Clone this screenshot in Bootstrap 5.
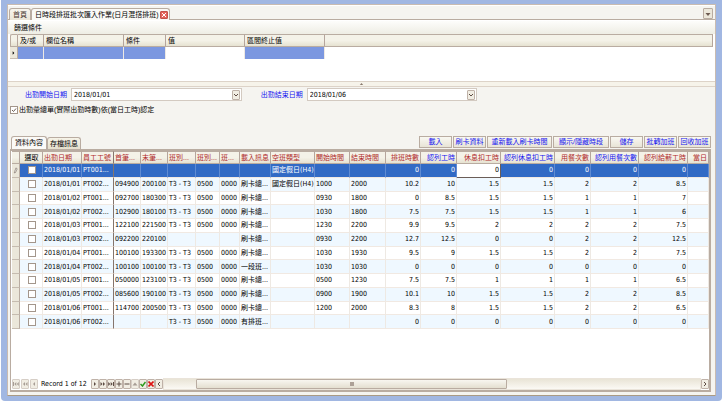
<!DOCTYPE html>
<html lang="zh-Hant">
<head>
<meta charset="utf-8">
<meta name="viewport" content="width=device-width, initial-scale=1">
<title>日時段排班批次匯入作業</title>
<link href="https://cdn.jsdelivr.net/npm/bootstrap@5.3.0/dist/css/bootstrap.min.css" rel="stylesheet">
<style>
:root{--line:#b9aca1;--soft:#ddd3c8;--face:#f5f4f0;--data:"DejaVu Sans Condensed","Noto Sans CJK TC",sans-serif}
body{font-family:"Liberation Sans","Noto Sans CJK TC",sans-serif;font-size:7px;line-height:10px;color:#000;background:#fff;padding:0 1px 1px}
button,input{font:inherit;color:inherit;padding:0;margin:0;border-radius:0}
svg{display:block}
.frame{background:#a1b7e2;padding:4px 6px 5px 6px;border-radius:0 0 4px 4px}
.shell{background:var(--face);border:1px solid #c9bbb0;border-bottom-color:#a99a84}
.tabstrip{height:15px;padding:2px 2px 0 1px;border-bottom:1px solid var(--line);border-top:1px solid #fff}
.pagetab{height:13px;background:linear-gradient(#f8f6ee,#e9e4d4);border:1px solid var(--line);border-bottom:0;border-radius:3px 3px 0 0;padding:0 3px;color:#4a3a34}
.pagetab.current{background:#faf9f6;color:#000;padding-right:1px}
.closebox{width:8px;height:8px;background:#e4645c;border:1px solid #c4524b;border-radius:1px;margin-left:1px}
.dropbox{width:10px;height:11px;background:#ece7da;border:1px solid var(--line);border-radius:1px;color:#6d5a50}
.filterhead{height:14px;padding:0 6px;border-top:1px solid #fff;background:linear-gradient(#fdfdfb,#eeede4)}
.filterbody{background:#fff;height:47px;padding:0 2px}
.gridtable{table-layout:fixed;border-collapse:separate;border-spacing:0;line-height:10px}
.gridtable th{font-weight:400;height:13px;padding:0 2px;background:linear-gradient(#f4f2e8 50%,#e6e2d1);border-right:1px solid #b5a59c;border-top:1px solid var(--line);border-bottom:1px solid var(--line);white-space:nowrap;overflow:hidden}
.gridtable td{height:12px;padding:0 2px;white-space:nowrap;overflow:hidden;border-right:1px solid #eee9e3}
.gridtable td.marker{background:#ebe7da;border-right:1px solid var(--line);border-bottom:1px solid #c6bcb0;padding:0 1px}
.filterbody .gridtable th:first-child{border-left:1px solid var(--line);border-top-left-radius:2px}
.filterbody .gridtable td.fill{background:#7b97e0}
.splitbar{height:6px;border-top:1px solid var(--soft);border-bottom:1px solid var(--soft);background:#f6f3ea;color:#8a7a6e}
.datefield{background:#fff;border:1px solid #d3cac1;height:13px;padding:0 1px 0 2px}
.datefield input{border:0;outline:0;background:none;min-width:0;height:11px;font-family:var(--data)}
.bluetext{color:#1414f0}
.dates{padding-top:1px}
.dates>div{padding-right:2px}
.dates .dlabel{width:59px;text-align:right}
.tickbox{appearance:none;width:8px;height:8px;background:#fff;border:1px solid #a3968b;flex:none}
.tickbox:checked{background:#fff url("data:image/svg+xml,%3Csvg xmlns='http://www.w3.org/2000/svg' viewBox='0 0 6 6'%3E%3Cpath d='M1 3l1.500 1.500L5 1.500' fill='none' stroke='%236d6056'/%3E%3C/svg%3E") center/6px 6px no-repeat}
.tick{padding:0 2px;margin-top:4px;height:10px;gap:1px}
.lowerpart{padding:21px 4px 3px 2px}
.subtab{height:12px;border:1px solid var(--line);border-bottom:0;border-radius:3px 3px 0 0;padding:0 2px;background:linear-gradient(#f6f3e8,#e5dfcd);white-space:nowrap}
.subtab.current{height:13px;background:#fbfaf7;margin-left:1px;padding:0 3px}
.acts{gap:1px}
.act{height:12px;border:1px solid var(--line);background:linear-gradient(#f9f8f2,#e8e4d6);color:#1414f0;white-space:nowrap;line-height:10px;overflow:hidden}
.w-a{width:33px}.w-b{width:65px}.w-c{width:56px}
.gridbox{background:#fff;border:2px solid var(--line);border-left-width:1px;padding-left:1px}
.rota{height:178px}
.rota th{color:#b02a2a}
.gridtable.rota th,.gridtable.rota td{padding:0 0 0 1px}
.gridtable.rota .text-end{padding:0 1px}
.rota th.dk{color:#000}
.rota th.bl{color:#1414f0}
.rota td{border-bottom:1px solid #f1e9e2;font-family:var(--data)}
.rota tbody tr:nth-child(even) td:not(.marker){background:#eff8ff}
.rota tbody tr.sel td:not(.marker){background:#316ac5;color:#fff;border-right-color:#5f8bd2}
.rota tbody tr.sel td.editing:not(.marker){background:#fff;color:#000;border-color:#6b5d57}
.rota th.fixedcol,.rota td.fixedcol,.rota tbody tr.sel td.fixedcol:not(.marker){border-right:1px solid #85756d}
.rota .tickbox{display:block;margin:auto}
.pager{height:12px}
.pager .firsts{gap:1px}
.recno{margin:0 1px 0 3px;width:49px;white-space:nowrap;font-family:var(--data)}
.nb{width:8px;height:10px;background:#f1ede3;border:1px solid #bfb2a8;border-radius:1px;color:#5d4c44}
.nb:disabled{color:#a79d95;border-color:#d6cec6}
.rail{height:12px;background:linear-gradient(#e9e4d6,#fbf9f4);border:1px solid #eae4da}
.thumb{width:58%;height:10px;margin-left:6%;background:linear-gradient(#f8f6f0,#e4dfd0);border:1px solid var(--line);border-radius:1px}
.grip{width:4px;height:4px;background:#ada197}
</style>
<script src="https://cdn.jsdelivr.net/npm/bootstrap@5.3.0/dist/js/bootstrap.bundle.min.js"></script>
</head>
<body class="vh-100 d-flex flex-column">
<svg class="d-none">
<symbol id="i-prev" viewBox="0 0 6 6"><path d="M4 1L2 3l2 2z" fill="currentColor"/></symbol>
<symbol id="i-next" viewBox="0 0 6 6"><path d="M2 1l2 2-2 2z" fill="currentColor"/></symbol>
<symbol id="i-pprev" viewBox="0 0 6 6"><path d="M3 1L1 3l2 2zM5.500 1l-2 2 2 2z" fill="currentColor"/></symbol>
<symbol id="i-nnext" viewBox="0 0 6 6"><path d="M.5 1l2 2-2 2zM3 1l2 2-2 2z" fill="currentColor"/></symbol>
<symbol id="i-first" viewBox="0 0 6 6"><path d="M0 1h1v4H0zM3.300 1l-2 2 2 2zM5.800 1l-2 2 2 2z" fill="currentColor"/></symbol>
<symbol id="i-last" viewBox="0 0 6 6"><path d="M5 1h1v4H5zM.2 1l2 2-2 2zM2.700 1l2 2-2 2z" fill="currentColor"/></symbol>
<symbol id="i-plus" viewBox="0 0 6 6"><path d="M3 .5v5M.5 3h5" stroke="currentColor"/></symbol>
<symbol id="i-minus" viewBox="0 0 6 6"><path d="M.5 3h5" stroke="currentColor"/></symbol>
<symbol id="i-up" viewBox="0 0 6 6"><path d="M3 1.500l2.500 3h-5z" fill="currentColor"/></symbol>
<symbol id="i-down" viewBox="0 0 6 6"><path d="M3 5l2.500-3h-5z" fill="currentColor"/></symbol>
<symbol id="i-chev" viewBox="0 0 6 6"><path d="M1 2l2 2 2-2" fill="none" stroke="currentColor"/></symbol>
<symbol id="i-left" viewBox="0 0 6 6"><path d="M4 1L2 3l2 2" fill="none" stroke="currentColor"/></symbol>
<symbol id="i-right" viewBox="0 0 6 6"><path d="M2 1l2 2-2 2" fill="none" stroke="currentColor"/></symbol>
<symbol id="i-ok" viewBox="0 0 6 6"><path d="M.5 3l2 2L5.500 1" fill="none" stroke="#2c9a1c" stroke-width="1.500"/></symbol>
<symbol id="i-no" viewBox="0 0 6 6"><path d="M.5.5l5 5M5.500.5l-5 5" stroke="#dc1414" stroke-width="1.600"/></symbol>
<symbol id="i-x" viewBox="0 0 6 6"><path d="M1 1l4 4M5 1L1 5" stroke="#fff"/></symbol>
<symbol id="i-pen" viewBox="0 0 6 8"><path d="M2 6l-.5 1.500L3 7l2-4.500L3.500 1.500z" fill="#fff" stroke="#6d5d52" stroke-width=".7"/></symbol>
</svg>
<div class="frame flex-grow-1 d-flex flex-column">
<main class="shell flex-grow-1 d-flex flex-column">
  <nav class="tabstrip d-flex">
    <button class="pagetab">首頁</button>
    <div class="pagetab current d-flex align-items-center"><span>日時段排班批次匯入作業(日月混搭排班)</span><button class="closebox" aria-label="關閉"><svg width="6" height="6"><use href="#i-x"/></svg></button></div>
    <button class="dropbox ms-auto d-flex align-items-center justify-content-center" aria-label="分頁清單"><svg width="6" height="6"><use href="#i-down"/></svg></button>
  </nav>
  <div class="filterhead d-flex align-items-center">篩選條件</div>
  <div class="filterbody">
    <table class="gridtable w-100">
      <colgroup><col style="width:8px"><col style="width:26px"><col style="width:80px"><col style="width:42px"><col style="width:79px"><col style="width:80px"><col></colgroup>
      <thead><tr><th></th><th>及/或</th><th>欄位名稱</th><th>條件</th><th>值</th><th>區間終止值</th><th></th></tr></thead>
      <tbody><tr><td class="marker"><svg width="5" height="6"><use href="#i-next"/></svg></td><td class="fill"></td><td class="fill"></td><td class="fill"></td><td></td><td class="fill"></td><td class="border-0"></td></tr></tbody>
    </table>
  </div>
  <div class="splitbar d-flex align-items-center justify-content-center"><svg width="5" height="4"><use href="#i-up"/></svg></div>
  <div class="dates d-flex">
    <div class="d-flex col-4 align-items-center gap-1">
      <label class="dlabel bluetext flex-shrink-0" for="d1">出勤開始日期</label>
      <div class="datefield d-flex align-items-center flex-grow-1"><input id="d1" class="flex-grow-1" value="2018/01/01"><button class="nb d-flex align-items-center justify-content-center" aria-label="選擇開始日期"><svg width="6" height="6"><use href="#i-chev"/></svg></button></div>
    </div>
    <div class="d-flex col-4 align-items-center gap-1">
      <label class="dlabel bluetext flex-shrink-0" for="d2">出勤結束日期</label>
      <div class="datefield d-flex align-items-center flex-grow-1"><input id="d2" class="flex-grow-1" value="2018/01/06"><button class="nb d-flex align-items-center justify-content-center" aria-label="選擇結束日期"><svg width="6" height="6"><use href="#i-chev"/></svg></button></div>
    </div>
  </div>
  <div class="tick d-flex align-items-center"><input class="tickbox" type="checkbox" id="c1" checked><label for="c1">出勤彙總單(實際出勤時數)依(當日工時)認定</label></div>
  <section class="lowerpart flex-grow-1 d-flex flex-column">
    <div class="d-flex align-items-end">
      <button class="subtab current">資料內容</button><button class="subtab">存檔訊息</button>
      <div class="acts ms-auto d-flex align-self-start">
        <button class="act w-a">載入</button><button class="act w-a">刷卡資料</button><button class="act w-b">重新載入刷卡時間</button><button class="act w-c">顯示/隱藏時段</button><button class="act w-a">儲存</button><button class="act w-a">批轉加班</button><button class="act w-a">回收加班</button>
      </div>
    </div>
    <div class="gridbox flex-grow-1 d-flex flex-column justify-content-between overflow-hidden">
      <table class="gridtable rota w-100">
        <colgroup id="cols"></colgroup>
        <thead><tr id="heads"></tr></thead>
        <tbody id="rows"></tbody>
      </table>
      <div class="pager d-flex align-items-center" id="pager"></div>
    </div>
  </section>
</main>
</div>
<script>
const cols=[['',8,'dk'],['選取',23,'dk text-center'],['出勤日期',39],['員工工號',32],['首筆...',27],['末筆...',27],['班別...',28],['班別...',24],['班...',20],['載入訊息',31],['空班類型',44],['開始時間',35],['結束時間',36],['排班時數',35,'text-end'],['認列工時',36,'bl text-end'],['休息扣工時',44,'text-end'],['認列休息扣工時',54,'bl text-end'],['用餐次數',36,'text-end'],['認列用餐次數',48,'bl text-end'],['認列給薪工時',49,'text-end'],['當日',0,'text-end']];
const T='T3 - T3|0500|0000|';
const data=[
'01/01|PT001...|||||||國定假日(H4)|||0|0|0|0|0|0|0',
'01/01|PT002...|094900|200100|'+T+'刷卡總...|國定假日(H4)|1000|2000|10.2|10|1.5|1.5|2|2|8.5',
'01/02|PT001...|092700|180300|'+T+'刷卡總...||0930|1800|0|8.5|1.5|1.5|1|1|7',
'01/02|PT002...|102900|180100|'+T+'刷卡總...||1030|1800|7.5|7.5|1.5|1.5|1|1|6',
'01/03|PT001...|122100|221500|'+T+'刷卡總...||1230|2200|9.9|9.5|2|2|2|2|7.5',
'01/03|PT002...|092200|220100||||刷卡總...||0930|2200|12.7|12.5|0|0|2|2|12.5',
'01/04|PT001...|100100|193300|'+T+'刷卡總...||1030|1930|9.5|9|1.5|1.5|2|2|7.5',
'01/04|PT002...|100100|100100|'+T+'一段班...||1030|1030|0|0|0|0|0|0|0',
'01/05|PT001...|050000|123100|'+T+'刷卡總...||0500|1230|7.5|7.5|1|1|1|1|6.5',
'01/05|PT002...|085600|190100|'+T+'刷卡總...||0900|1900|10.1|10|1.5|1.5|2|2|8.5',
'01/06|PT001...|114700|200500|'+T+'刷卡總...||1200|2000|8.3|8|1.5|1.5|2|2|6.5',
'01/06|PT002...|||'+T+'有排班...||||0|0|0|0|0|0|0'];
const icon=(n,w=6,h=6)=>`<svg width="${w}" height="${h}"><use href="#i-${n}"/></svg>`;
const $=id=>document.getElementById(id);
$('cols').innerHTML=cols.map(c=>c[1]?`<col style="width:${c[1]}px">`:'<col>').join('');
$('heads').innerHTML=cols.map((c,i)=>`<th class="${c[2]||''}${i==3?' fixedcol':''}">${c[0]}</th>`).join('');
$('rows').innerHTML=data.map((d,r)=>`<tr class="${r?'':'sel'}"><td class="marker">${r?'':icon('pen',5,8)}</td><td><input class="tickbox" type="checkbox" aria-label="選取第${r+1}筆"></td>`+
 d.split('|').map((v,i)=>`<td class="${i==1?'fixedcol ':''}${i>10?'text-end ':''}${!r&&i==13?'editing':''}">${i?v:'2018/'+v}</td>`).join('')+'<td></td></tr>').join('');
const nb=(n,off)=>`<button class="nb flex-shrink-0 d-flex align-items-center justify-content-center" aria-label="${n}"${off?' disabled':''}>${icon(n)}</button>`;
$('pager').innerHTML='<div class="firsts d-flex">'+nb('first',1)+nb('pprev',1)+nb('prev',1)+'</div><span class="recno">Record 1 of 12</span>'+nb('next')+nb('nnext')+nb('last')+nb('plus')+nb('minus')+nb('up',1)+nb('ok')+nb('no')+nb('left')+
 '<div class="rail flex-grow-1"><div class="thumb d-flex align-items-center justify-content-center"><div class="grip"></div></div></div>'+nb('right');
</script>
</body>
</html>
